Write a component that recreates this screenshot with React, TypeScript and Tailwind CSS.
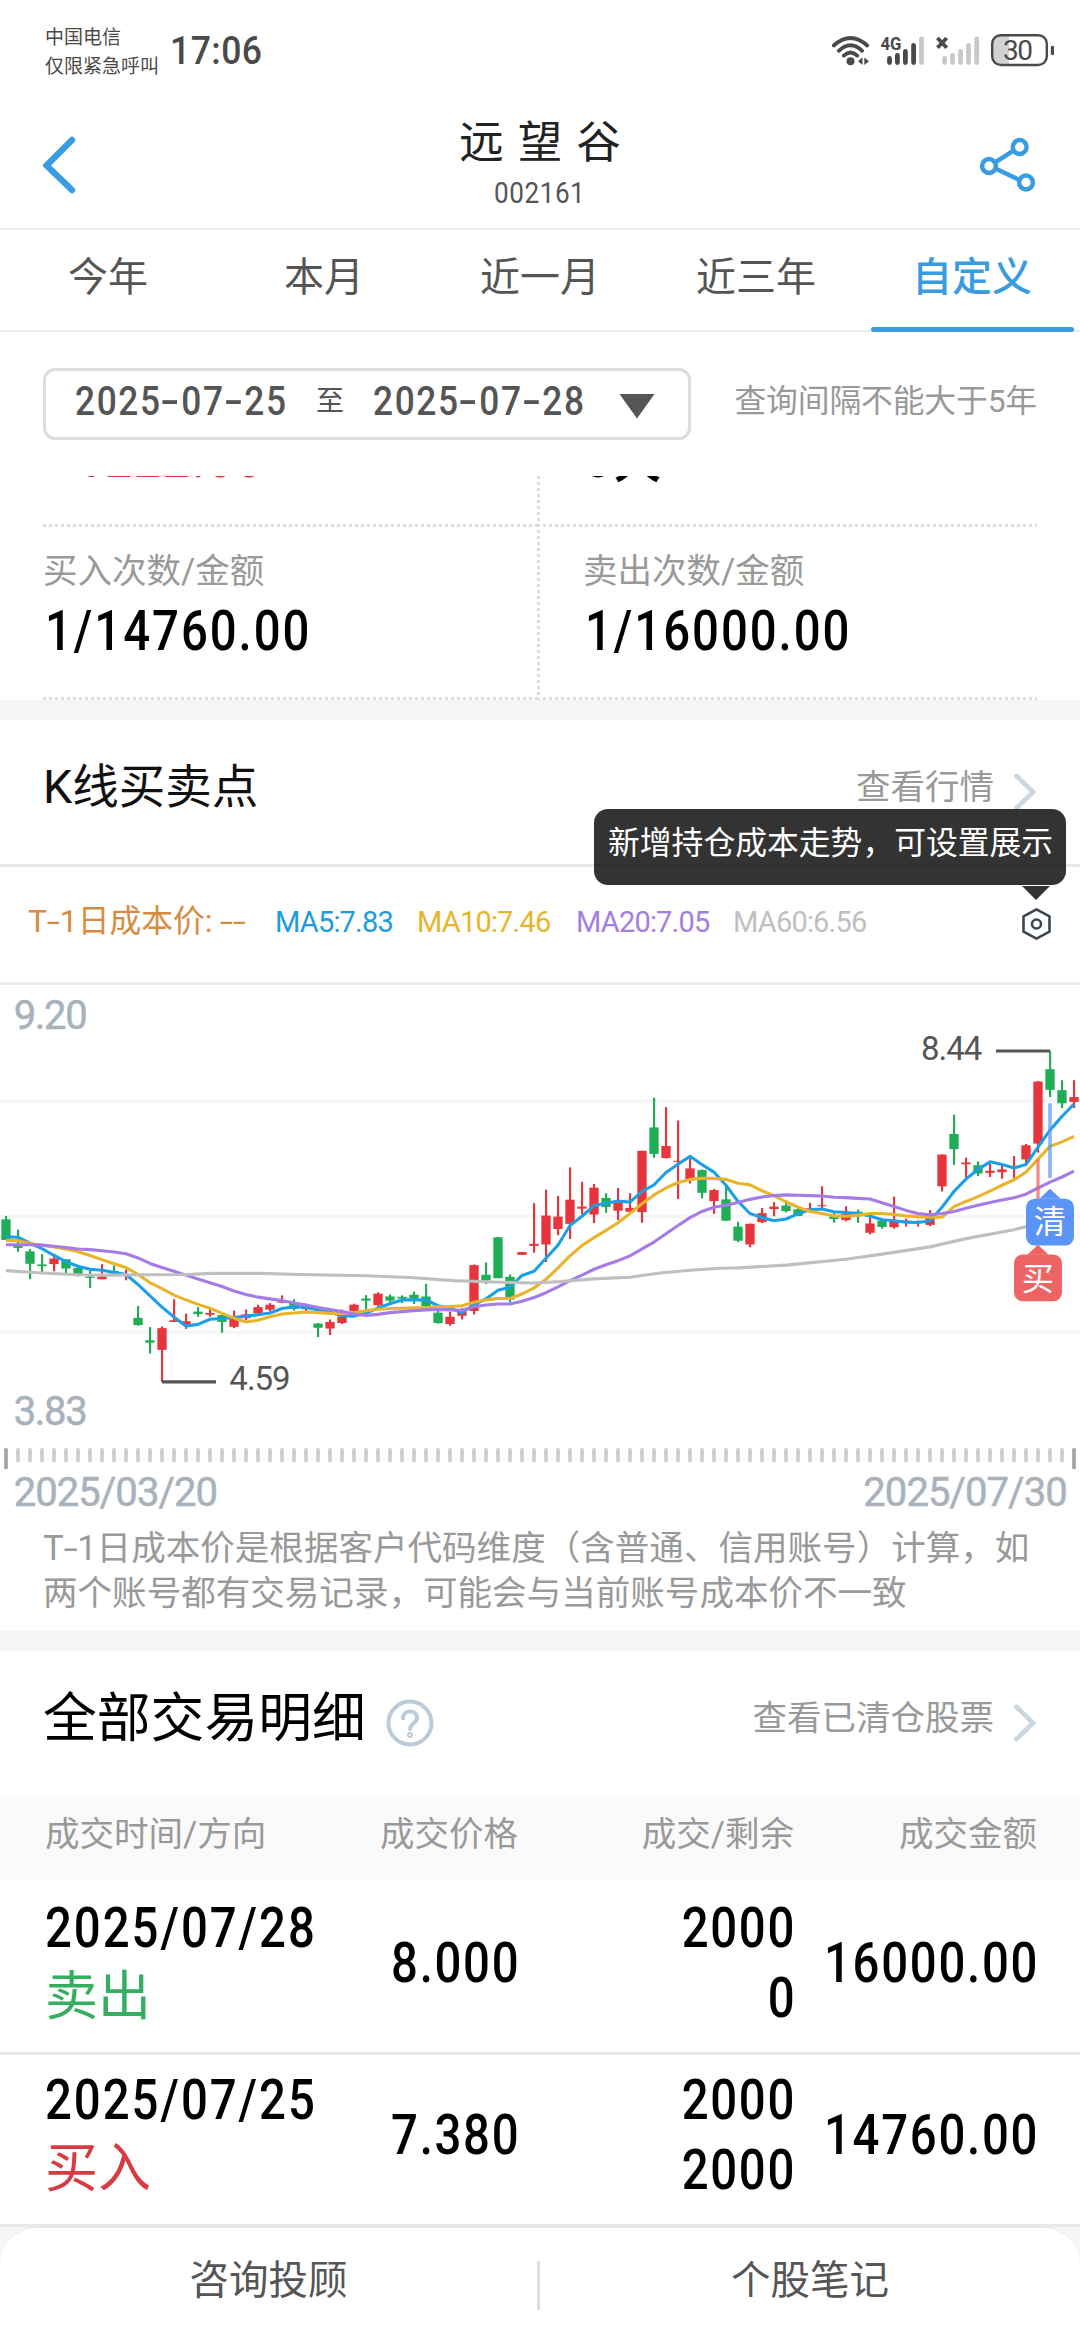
import React from "react";

// [high, body top, body bottom, low], "r" = up, "g" = down
type Candle = [number, number, number, number, "r" | "g"];

const candles: Candle[] = [
  [627, 637, 697, 697, "g"], [667, 712, 720, 731, "g"], [723, 730, 766, 811, "g"],
  [738, 768, 773, 792, "g"], [737, 751, 767, 788, "r"], [753, 753, 780, 793, "g"],
  [770, 778, 801, 803, "g"], [785, 803, 807, 836, "g"], [767, 803, 811, 811, "r"],
  [771, 787, 795, 797, "g"], [783, 796, 798, 814, "r"], [889, 923, 944, 946, "g"],
  [950, 988, 995, 1027, "g"], [948, 953, 1016, 1109, "r"], [869, 930, 935, 935, "r"],
  [911, 933, 944, 955, "r"], [892, 905, 912, 920, "g"], [895, 909, 914, 920, "r"],
  [915, 915, 935, 966, "g"], [902, 922, 949, 953, "r"], [899, 913, 924, 930, "r"],
  [885, 892, 910, 915, "r"], [880, 885, 899, 905, "r"], [858, 875, 879, 880, "r"],
  [869, 879, 897, 902, "g"], [882, 892, 898, 905, "r"], [938, 940, 952, 979, "g"],
  [928, 935, 954, 973, "r"], [899, 919, 938, 941, "r"], [882, 885, 903, 908, "r"],
  [857, 867, 873, 905, "g"], [849, 853, 886, 890, "r"], [855, 861, 873, 885, "g"],
  [858, 862, 867, 880, "g"], [847, 856, 867, 883, "g"], [824, 861, 890, 892, "g"],
  [900, 908, 938, 940, "g"], [905, 920, 941, 946, "r"], [895, 905, 917, 928, "r"],
  [768, 770, 903, 913, "r"], [762, 798, 814, 825, "g"], [688, 689, 808, 808, "g"],
  [797, 804, 870, 878, "g"], [732, 732, 740, 740, "r"], [590, 708, 714, 734, "r"],
  [551, 626, 710, 761, "r"], [569, 629, 665, 683, "r"], [486, 580, 650, 694, "r"],
  [528, 600, 606, 622, "r"], [534, 545, 623, 648, "r"], [561, 575, 601, 618, "g"],
  [546, 589, 612, 639, "r"], [561, 604, 615, 620, "r"], [438, 438, 616, 647, "r"],
  [284, 370, 447, 458, "g"], [311, 424, 459, 460, "r"], [350, 467, 470, 578, "r"],
  [460, 489, 520, 533, "r"], [492, 494, 560, 576, "g"], [549, 552, 584, 621, "r"],
  [537, 579, 641, 641, "g"], [644, 658, 699, 703, "g"], [649, 650, 710, 718, "r"],
  [604, 619, 645, 648, "r"], [587, 600, 607, 628, "r"], [582, 597, 613, 617, "g"],
  [600, 608, 627, 628, "g"], [589, 605, 612, 615, "r"], [541, 596, 599, 610, "r"],
  [615, 625, 636, 647, "g"], [599, 621, 639, 643, "r"], [609, 615, 628, 647, "g"],
  [627, 649, 676, 681, "r"], [635, 641, 659, 664, "g"], [571, 641, 660, 664, "r"],
  [635, 641, 644, 658, "r"], [640, 643, 646, 658, "r"], [610, 620, 653, 657, "r"],
  [448, 449, 541, 556, "r"], [333, 389, 433, 479, "g"], [458, 472, 477, 516, "r"],
  [469, 480, 504, 511, "g"], [475, 496, 502, 514, "r"], [481, 492, 500, 519, "r"],
  [453, 484, 488, 519, "r"], [418, 422, 463, 480, "r"], [235, 237, 417, 443, "r"],
  [148, 201, 261, 282, "g"], [233, 262, 300, 314, "g"], [233, 282, 296, 314, "r"],
];

const ma5 = [
  688, 689, 706, 722, 742, 760, 773, 782, 785, 791, 797, 826, 859, 892, 921, 947, 942, 927, 925, 922,
  918, 914, 909, 896, 891, 892, 900, 907, 917, 918, 910, 894, 882, 871, 871, 871, 888, 895, 908, 885,
  868, 843, 834, 800, 788, 750, 712, 655, 628, 597, 590, 584, 587, 556, 537, 501, 477, 454, 478, 500,
  538, 585, 620, 632, 641, 636, 621, 609, 607, 615, 617, 620, 627, 638, 641, 645, 646, 641, 602, 556,
  520, 492, 470, 478, 488, 478, 427, 378, 338, 302,
];

const ma10 = [
  698, 699, 707, 712, 717, 723, 731, 742, 754, 766, 777, 797, 821, 838, 857, 871, 884, 895, 910, 924,
  935, 930, 920, 912, 909, 906, 908, 910, 911, 908, 902, 898, 896, 895, 894, 893, 891, 890, 888, 878,
  871, 867, 867, 854, 836, 811, 778, 743, 713, 690, 669, 647, 620, 592, 566, 546, 530, 521, 518, 518,
  521, 532, 537, 554, 568, 586, 602, 614, 620, 627, 628, 625, 620, 620, 623, 627, 629, 631, 631, 600,
  585, 571, 555, 538, 522, 500, 462, 425, 412, 396,
];

const ma20 = [
  711, 711, 711, 712, 715, 719, 723, 725, 728, 732, 737, 749, 765, 777, 788, 799, 810, 821, 832, 845,
  855, 863, 868, 873, 880, 886, 893, 899, 905, 912, 916, 913, 908, 905, 902, 900, 899, 900, 901, 891,
  886, 883, 883, 875, 864, 850, 833, 815, 799, 782, 769, 757, 743, 723, 703, 679, 655, 632, 614, 602,
  596, 588, 579, 572, 568, 566, 567, 568, 569, 573, 574, 576, 578, 589, 600, 611, 620, 624, 620, 614,
  605, 596, 588, 581, 574, 564, 546, 529, 514, 497,
];

const ma60 =
  "18,786 126,793 234,798 340,799 420,798 560,797 640,794 780,794 900,797 1062,800 1098,801 1230,806 1360,815 1480,819 1600,822 1680,818 1780,810 1890,805 1980,793 2070,785 2160,779 2214,778 2358,770 2538,753 2646,738 2790,717 2898,693 3042,667 3114,650 3222,620";

const toPoints = (values: number[]) =>
  values.map((v, i) => `${18 + i * 36},${v}`).join(" ");

const tabs = ["今年", "本月", "近一月", "近三年", "自定义"];

const trades = [
  { date: "2025/07/28", side: "卖出", price: "8.000", qty: "2000", rest: "0", amount: "16000.00" },
  { date: "2025/07/25", side: "买入", price: "7.380", qty: "2000", rest: "2000", amount: "14760.00" },
];

// narrow figures, aligned left
const Num = ({ children }: { children: React.ReactNode }) => (
  <span className="inline-block origin-left scale-x-[0.86] text-[55px] font-medium tracking-[2.300px] whitespace-nowrap">
    {children}
  </span>
);

// narrow figures, aligned right
const NumRight = ({ children }: { children: React.ReactNode }) => (
  <span className="inline-block origin-right scale-x-[0.86] text-[55px] font-medium tracking-[2px] whitespace-nowrap -mr-[2px]">
    {children}
  </span>
);

const Dash = () => <span className="inline-block scale-x-[1.500] mx-[2px]">-</span>;

const DateText = ({ value }: { value: string }) => {
  const [y, m, d] = value.split("-");
  return (
    <span className="inline-block origin-left scale-x-[0.86] text-[41px] leading-[60px] font-medium tracking-[1.900px] whitespace-nowrap">
      {y}
      <span className="inline-block scale-x-[1.600] mx-[3.500px]">-</span>
      {m}
      <span className="inline-block scale-x-[1.600] mx-[3.500px]">-</span>
      {d}
    </span>
  );
};

const StatusBar = () => (
  <div className="h-[103px] shrink-0 flex justify-between pl-[45px] pr-[26px] text-[#4a4a4a]">
    <div className="flex">
      <div className="w-[125px] pt-[23px] text-[19px] leading-[29px] whitespace-nowrap">
        <p>中国电信</p>
        <p>仅限紧急呼叫</p>
      </div>
      <span className="inline-block origin-left scale-x-[0.900] pt-[31px] text-[39.500px] leading-[40px] font-medium tracking-[0.500px]">17:06</span>
    </div>
    <svg className="mt-[30px]" width="224" height="40" viewBox="830 30 224 40" fill="none">
      <g stroke="#4a4a4a" strokeWidth="3.8" strokeLinecap="round">
        <path d="M833.8 45.5Q850.5 30.500 867.200 45.500" />
        <path d="M838.800 50.800Q850.500 39.800 862.200 50.800" />
        <path d="M843.800 55.600Q850.500 49.400 857.200 55.600" />
      </g>
      <circle cx="850.500" cy="61.300" r="4" fill="#4a4a4a" />
      <path d="M862.500 57.500v7.500l-4.500-3.800zM864.300 57.500v7.500l4.700-3.800z" fill="#4a4a4a" />
      <text x="880.500" y="50" fontSize="18.500" fontWeight="700" textLength="21" lengthAdjust="spacingAndGlyphs" fill="#4a4a4a">4G</text>
      <g strokeWidth="4.800" strokeLinecap="round">
        <path d="M889.500 58.500v4M897.400 55.500v7M905.400 51.500v11M913.600 45.500v17" stroke="#4a4a4a" />
        <path d="M921.500 39v23.500M944.600 58.500v4M952.500 55.500v7M960.500 51.500v11M968.500 45.500v17M976.700 39v23.500" stroke="#c9c9c9" />
      </g>
      <path d="M937.500 38l9.200 9.800M946.700 38l-9.200 9.800" stroke="#4a4a4a" strokeWidth="3.800" />
      <path d="M1009 35.500v29.500h-8a8.500 8.500 0 0 1-8.500-8.500v-12.500a8.500 8.500 0 0 1 8.500-8.500z" fill="#d2d2d2" />
      <rect x="992.200" y="35.200" width="54.600" height="29.800" rx="8.500" stroke="#4a4a4a" strokeWidth="2.400" />
      <path d="M1052.500 47.500v6" stroke="#4a4a4a" strokeWidth="3.400" strokeLinecap="round" />
      <text x="1018" y="60" fontSize="28" textAnchor="middle" textLength="30" fill="#4a4a4a">30</text>
    </svg>
  </div>
);

const Header = () => (
  <div className="h-[127px] shrink-0 flex justify-between border-b-2 border-[#ececec] px-[43px]">
    <svg className="mt-[32px]" width="34" height="60" viewBox="0 0 34 60" fill="none">
      <path d="M29 5L3.500 30.500 29 55" stroke="#3a9ce0" strokeWidth="6.400" strokeLinecap="round" />
    </svg>
    <div className="flex flex-col items-center text-center pl-[24px]">
      <h1 className="mt-[14px] text-[44.500px] leading-[52px] text-[#222] [word-spacing:3px] font-normal">远 望 谷</h1>
      <span className="mt-[8px] inline-block scale-x-[0.900] text-[29px] leading-[32px] text-[#555] tracking-[0.600px]">002161</span>
    </div>
    <svg className="mt-[34px]" width="58" height="60" viewBox="979 137 58 60" fill="none" stroke="#3a9ce0" strokeWidth="4.500">
      <circle cx="989" cy="166" r="6.900" />
      <circle cx="1019.700" cy="147" r="6.900" />
      <circle cx="1026" cy="182.500" r="6.900" />
      <path d="M995 162.500l18.500-11.800M995.500 168.500l24 11.500" />
    </svg>
  </div>
);

const Tabs = () => (
  <div className="h-[102px] shrink-0 flex border-b-2 border-[#ececec] text-[40px] leading-[60px] text-[#555]">
    {tabs.map((tab, i) =>
      i === 4 ? (
        <div key={tab} className="w-[216px] flex flex-col items-center pt-[18px] text-[#3a9ce0] font-medium">
          {tab}
          <span className="mt-[19px] w-[203px] h-[5px] shrink-0 rounded-full bg-[#3a9ce0]" />
        </div>
      ) : (
        <div key={tab} className="w-[216px] text-center pt-[18px]">
          {tab}
        </div>
      )
    )}
  </div>
);

const Chevron = () => (
  <svg className="mt-[12px]" width="24" height="40" viewBox="0 0 24 40" fill="none">
    <path d="M3.500 4L20 20 3.500 36" stroke="#cbd6e0" strokeWidth="4.800" strokeLinecap="round" />
  </svg>
);

const Stat = ({ label, value }: { label: string; value: string }) => (
  <div className="pt-[22px] h-[170px]">
    <p className="text-[34.500px] leading-[44px] text-[#999]">{label}</p>
    <p className="mt-[13px] pl-[2px] leading-[50px]">
      <Num>{value}</Num>
    </p>
  </div>
);

const Chart = () => (
  <svg width="1080" height="530" viewBox="0 -45 3240 1590" fill="none" className="block shrink-0">
    <g transform="scale(1 1.033)">
      {[293, 629, 965].map((y) => (
        <path key={y} d={`M0 ${y}H3240`} stroke="#f5f5f6" strokeWidth="9" />
      ))}
      {candles.map(([high, top, bottom, low, dir], i) => (
        <g key={i} fill={dir === "r" ? "#e6353c" : "#1fae56"}>
          <rect x={15 + i * 36} y={high} width="6.500" height={low - high} />
          <rect x={4 + i * 36} y={top} width="28" height={bottom - top} />
        </g>
      ))}
      <g strokeWidth="9" strokeLinejoin="round">
        <polyline points={toPoints(ma5)} stroke="#1b9fe6" />
        <polyline points={toPoints(ma10)} stroke="#eab42a" />
        <polyline points={toPoints(ma20)} stroke="#a57be8" />
        <polyline points={ma60} stroke="#bfbfbf" />
        <path d="M486 1109H648M2988 148H3150" stroke="#555" />
      </g>
      <path d="M3114 463V640" stroke="#ee6464" strokeOpacity="0.750" strokeWidth="10" />
      <path d="M3150 300V517" stroke="#5a95f5" strokeOpacity="0.700" strokeWidth="11" />
      <path d="M3150 548l32 29h-64z" fill="#5a95f5" />
      <rect x="3078" y="577" width="144" height="136" rx="26" fill="#5a95f5" />
      <path d="M3114 711l32 29h-64z" fill="#ee6464" />
      <rect x="3042" y="739" width="144" height="136" rx="26" fill="#ee6464" />
      {candles.map((_, i) => {
        const edge = i === 0 || i === candles.length - 1;
        return (
          <rect key={i} x={12.5 + i * 36} y="1302" width="11" height={edge ? 60 : 40} fill={edge ? "#a3a3a3" : "#cdcdcd"} />
        );
      })}
    </g>
    <g fontSize="97" fill="#fff" textAnchor="middle">
      <text x="3150" y="698">清</text>
      <text x="3114" y="870">买</text>
    </g>
    <g fontSize="99" fill="#555">
      <text x="688" y="1171" textLength="184">4.59</text>
      <text x="2763" y="180" textLength="184">8.44</text>
    </g>
    <g fontSize="120" fill="#a9b2bb" stroke="#a9b2bb" strokeWidth="1.500">
      <text x="41" y="87" textLength="222">9.20</text>
      <text x="41" y="1275" textLength="222">3.83</text>
      <text x="41" y="1518" textLength="613">2025/03/20</text>
      <text x="2590" y="1518" textLength="613">2025/07/30</text>
    </g>
  </svg>
);

const App = () => {
  return (
    <div className="w-[1080px] h-[2340px] overflow-hidden flex flex-col bg-white text-black font-['Roboto','Noto_Sans_CJK_SC',sans-serif]">
      <StatusBar />
      <Header />
      <Tabs />

      <div className="h-[144px] shrink-0 flex items-start justify-between pl-[43px] pr-[43px] pt-[36px]">
        <div className="w-[648px] h-[72px] flex border-[3px] border-[#ddd] rounded-[12px] pl-[29px] text-[#555]">
          <div className="w-[241px]">
            <DateText value="2025-07-25" />
          </div>
          <span className="w-[57px] text-[28px] leading-[62px]">至</span>
          <div className="w-[242px]">
            <DateText value="2025-07-28" />
          </div>
          <svg className="mt-[22px] ml-[4px]" width="36" height="26" viewBox="0 0 36 26">
            <path d="M0.500 1h35L18 25.500z" fill="#555" />
          </svg>
        </div>
        <span className="text-[31.800px] leading-[66px] text-[#999] tracking-[-0.150px]">查询间隔不能大于5年</span>
      </div>

      {/* scrolled summary, first row is cut by the sticky filter */}
      <div className="h-[224px] shrink-0 overflow-hidden flex px-[43px]">
        <div className="w-[494px]">
          <div className="h-[48px] overflow-hidden flex items-start text-[#d9383f]">
            <div className="-mt-[44px] pl-[5px] leading-[52px]">
              <Num>+1222.00</Num>
            </div>
          </div>
          <div className="h-[3px] bg-[repeating-linear-gradient(90deg,#ddd_0_3px,transparent_3px_6px)]" />
          <Stat label="买入次数/金额" value="1/14760.00" />
          <div className="h-[3px] bg-[repeating-linear-gradient(90deg,#ddd_0_3px,transparent_3px_6px)]" />
        </div>
        <div className="w-[3px] bg-[repeating-linear-gradient(180deg,#ddd_0_3px,transparent_3px_6px)]" />
        <div className="w-[497px]">
          <div className="h-[48px] overflow-hidden flex items-start pl-[45px]">
            <div className="-mt-[44px] leading-[52px]">
              <Num>3天</Num>
            </div>
          </div>
          <div className="h-[3px] bg-[repeating-linear-gradient(90deg,transparent_0_3px,#ddd_3px_6px)]" />
          <div className="pl-[43px]">
            <Stat label="卖出次数/金额" value="1/16000.00" />
          </div>
          <div className="h-[3px] bg-[repeating-linear-gradient(90deg,transparent_0_3px,#ddd_3px_6px)]" />
        </div>
      </div>

      <div className="h-5 shrink-0 bg-[#f5f5f5]" />

      <div className="relative h-[147px] shrink-0 flex justify-between border-b-[3px] border-[#e8e8e8] pl-[43px] pr-[43px] pt-[40px]">
        <h2 className="text-[46.500px] leading-[54px] text-[#111]">K线买卖点</h2>
        <div className="flex">
          <span className="text-[34.500px] leading-[54px] text-[#999] mr-[19px]">查看行情</span>
          <Chevron />
        </div>
        <div className="absolute left-[594px] top-[89px] z-10 w-[472px] h-[76px] rounded-[14px] bg-black/80 text-white text-[31.800px] leading-[68px] pl-[14px] whitespace-nowrap">
          新增持仓成本走势，可设置展示
          <svg className="absolute left-[428px] top-[77px]" width="28" height="14" viewBox="0 0 28 14">
            <path d="M0 0h28L14 14z" fill="#333" />
          </svg>
        </div>
      </div>

      <div className="h-[118px] shrink-0 flex items-start border-b-[3px] border-[#ebebeb] pl-[28px] text-[29px] leading-[60px] whitespace-nowrap">
        <span className="w-[247px] mt-[24px] text-[31.800px] text-[#d68c40]">
          T<Dash />1日成本价: <Dash /><Dash />
        </span>
        <span className="w-[142px] mt-[25px] tracking-[-0.800px] text-[#1b9be0]">MA5:7.83</span>
        <span className="w-[159px] mt-[25px] tracking-[-0.800px] text-[#e6b52c]">MA10:7.46</span>
        <span className="w-[157px] mt-[25px] tracking-[-0.800px] text-[#a47ee3]">MA20:7.05</span>
        <span className="w-[288px] mt-[25px] tracking-[-0.800px] text-[#c0c0c0]">MA60:6.56</span>
        <svg className="mt-[40px]" width="32" height="34" viewBox="0 0 32 34" fill="none" stroke="#3b4650" strokeWidth="2.600" strokeLinejoin="round">
          <path d="M15.500 2.300L28.500 9.300V24.700L15.500 31.700 2.500 24.700V9.300z" />
          <circle cx="15.500" cy="17" r="4.500" />
        </svg>
      </div>

      <Chart />

      <div className="h-[116px] shrink-0 pl-[43px] pt-[11px] text-[34.550px] leading-[45px] text-[#999] whitespace-nowrap">
        <p>
          T<Dash />1日成本价是根据客户代码维度（含普通、信用账号）计算，如
        </p>
        <p>两个账号都有交易记录，可能会与当前账号成本价不一致</p>
      </div>

      <div className="h-5 shrink-0 bg-[#f5f5f5]" />

      <div className="h-[144px] shrink-0 flex justify-between px-[43px] pt-[36px]">
        <div className="flex">
          <h2 className="text-[53.800px] leading-[64px]">全部交易明细</h2>
          <svg className="mt-[12px] ml-[20px]" width="48" height="48" viewBox="0 0 48 48" fill="none" stroke="#bccbd9" strokeWidth="4" strokeLinecap="round">
            <circle cx="24" cy="24" r="21.500" />
            <path d="M17 19.500c0-4.500 3-7 7-7s7 2.500 7 6.500c0 5-7 5.500-7 11" />
            <circle cx="24" cy="36" r="1" />
          </svg>
        </div>
        <div className="flex pt-[3px]">
          <span className="text-[34.500px] leading-[57px] text-[#999] mr-[19px]">查看已清仓股票</span>
          <div className="pt-[1px]">
            <Chevron />
          </div>
        </div>
      </div>

      <div className="h-[85px] shrink-0 flex bg-[#fafafa] pl-[45px] pr-[43px] text-[34.500px] leading-[79px] text-[#999] whitespace-nowrap">
        <span className="w-[273px]">成交时间/方向</span>
        <span className="w-[200px] text-right">成交价格</span>
        <span className="w-[276px] text-right">成交/剩余</span>
        <span className="w-[243px] text-right">成交金额</span>
      </div>

      <div className="pt-[3px] shrink-0">
        {trades.map((t, i) => (
          <div
            key={t.date}
            className="h-[172px] flex border-b-[3px] border-[#e8e8e8] pl-[45px] pr-[43px] leading-[60px]"
          >
            <div className="w-[273px] pt-[15px]">
              <p className="h-[60px]">
                <Num>{t.date}</Num>
              </p>
              <p className={`mt-[9px] text-[53px] ${i === 0 ? "text-[#34ae60]" : "text-[#d63c44]"}`}>
                {t.side}
              </p>
            </div>
            <div className="w-[200px] pt-[50px] text-right">
              <NumRight>{t.price}</NumRight>
            </div>
            <div className="w-[276px] pt-[15px] text-right">
              <p className="h-[60px]">
                <NumRight>{t.qty}</NumRight>
              </p>
              <p className="h-[60px] mt-[10px]">
                <NumRight>{t.rest}</NumRight>
              </p>
            </div>
            <div className="w-[243px] pt-[50px] flex justify-end">
              <NumRight>{t.amount}</NumRight>
            </div>
          </div>
        ))}
      </div>

      <div className="grow bg-[#f5f5f5]">
        <div className="h-full flex items-start rounded-t-[36px] border-t border-[#e8e8e8] bg-white pt-[33px] text-[39.500px] leading-[40px] text-[#555]">
          <span className="w-[537px] text-center">咨询投顾</span>
          <span className="w-[3px] h-[49px] bg-[#ddd]" />
          <span className="w-[540px] text-center">个股笔记</span>
        </div>
      </div>
    </div>
  );
};

export default App;
